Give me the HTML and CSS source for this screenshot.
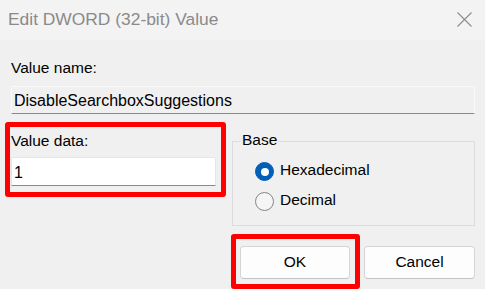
FILE: index.html
```html
<!DOCTYPE html>
<html lang="en">
<head>
<meta charset="utf-8">
<title>Edit DWORD (32-bit) Value</title>
<link rel="stylesheet" href="styles.css">
</head>
<body>
<div class="dialog">
  <div class="titlebar">
    <span class="title">Edit DWORD (32-bit) Value</span>
    <svg class="close" width="15" height="15" viewBox="0 0 15 15"><path d="M0.5 0.5 L14.5 14.5 M14.5 0.5 L0.5 14.5" stroke="#8c8c8c" stroke-width="1.1" fill="none"/></svg>
  </div>
  <div class="content">
    <div class="label name-label">Value name:</div>
    <div class="field readonly">DisableSearchboxSuggestions</div>
    <div class="row">
      <div class="highlight data-box">
        <div class="label data-label">Value data:</div>
        <div class="field input">1</div>
      </div>
      <div class="group">
        <div class="legend">Base</div>
        <div class="radio-row first">
          <span class="radio checked"></span>
          <span class="radio-text">Hexadecimal</span>
        </div>
        <div class="radio-row">
          <span class="radio"></span>
          <span class="radio-text">Decimal</span>
        </div>
      </div>
    </div>
    <div class="buttons">
      <div class="highlight ok-box">
        <div class="btn">OK</div>
      </div>
      <div class="btn cancel">Cancel</div>
    </div>
  </div>
</div>
</body>
</html>
```
FILE: styles.css
```css
html, body {
  margin: 0;
  padding: 0;
  background: #f0f0f0;
}
.dialog {
  width: 485px;
  height: 289px;
  overflow: hidden;
  background: #f0f0f0;
  font-family: "Liberation Sans", Arial, sans-serif;
  font-size: 15.5px;
  color: #000;
}
.titlebar {
  height: 40px;
  background: #f3f3f3;
  display: flex;
  align-items: center;
  justify-content: space-between;
  padding: 0 13px 0 8px;
  box-sizing: border-box;
}
.title {
  font-size: 17.4px;
  color: #8a8a8a;
  line-height: 20px;
  margin-top: -2px;
}
.close {
  display: block;
  margin-top: -1px;
}
.content {
  padding: 0 10px 0 5px;
}
.label {
  line-height: 18px;
  height: 18px;
  white-space: nowrap;
}
.name-label {
  margin: 19px 0 0 6px;
}
.field {
  box-sizing: border-box;
  height: 28px;
  line-height: 26px;
  padding-left: 2px;
  font-size: 16px;
  border: 1px solid #fafafa;
  border-bottom: 1px solid #8a8a8a;
  border-radius: 2px 2px 0 0;
  white-space: nowrap;
}
.readonly {
  margin: 9px 0 0 6px;
  background: #f0f0f0;
  padding-top: 1px;
}
.row {
  display: flex;
  align-items: flex-start;
  margin-top: 8px;
}
.highlight {
  border: 5px solid #ff0000;
  border-radius: 3px;
  box-sizing: border-box;
}
.data-box {
  width: 221px;
  height: 75px;
  padding: 5px 0 0 1px;
}
.input {
  width: 205px;
  height: 29px;
  margin-top: 7px;
  background: #ffffff;
  border: 1px solid #e6e6e6;
  border-bottom: 1px solid #8a8a8a;
  padding-left: 2px;
  padding-top: 2px;
}
.group {
  box-sizing: border-box;
  width: 243px;
  height: 85px;
  margin: 19px 0 0 6px;
  border: 1px solid #dcdcdc;
}
.legend {
  width: fit-content;
  line-height: 18px;
  height: 18px;
  margin: -11px 0 0 8px;
  padding: 0 1px;
  background: #f0f0f0;
}
.radio-row {
  display: flex;
  align-items: center;
  gap: 6px;
  margin-left: 22px;
  height: 19px;
}
.radio-row.first {
  margin-top: 13px;
}
.radio-row + .radio-row {
  margin-top: 11px;
}
.radio-text {
  line-height: 18px;
  margin-top: -3px;
}
.radio {
  box-sizing: border-box;
  width: 19px;
  height: 19px;
  border-radius: 50%;
  border: 1px solid #858585;
  background: #f5f5f5;
  flex: none;
  display: flex;
  align-items: center;
  justify-content: center;
}
.radio.checked {
  background: #005fb8;
  border-color: #005fb8;
}
.radio.checked::after {
  content: "";
  width: 8px;
  height: 8px;
  border-radius: 50%;
  background: #ffffff;
}
.buttons {
  display: flex;
  justify-content: flex-end;
  align-items: flex-start;
  margin-top: 8px;
}
.ok-box {
  width: 129px;
  padding: 7px 5px 5px 4px;
}
.btn {
  box-sizing: border-box;
  width: 110px;
  height: 33px;
  background: #fdfdfd;
  border: 1px solid #d5d5d5;
  border-bottom-color: #c4c4c4;
  border-radius: 4px;
  display: flex;
  align-items: center;
  justify-content: center;
  line-height: 18px;
  padding-bottom: 1px;
}
.cancel {
  width: 111px;
  margin: 12px 0 0 4px;
}
```
